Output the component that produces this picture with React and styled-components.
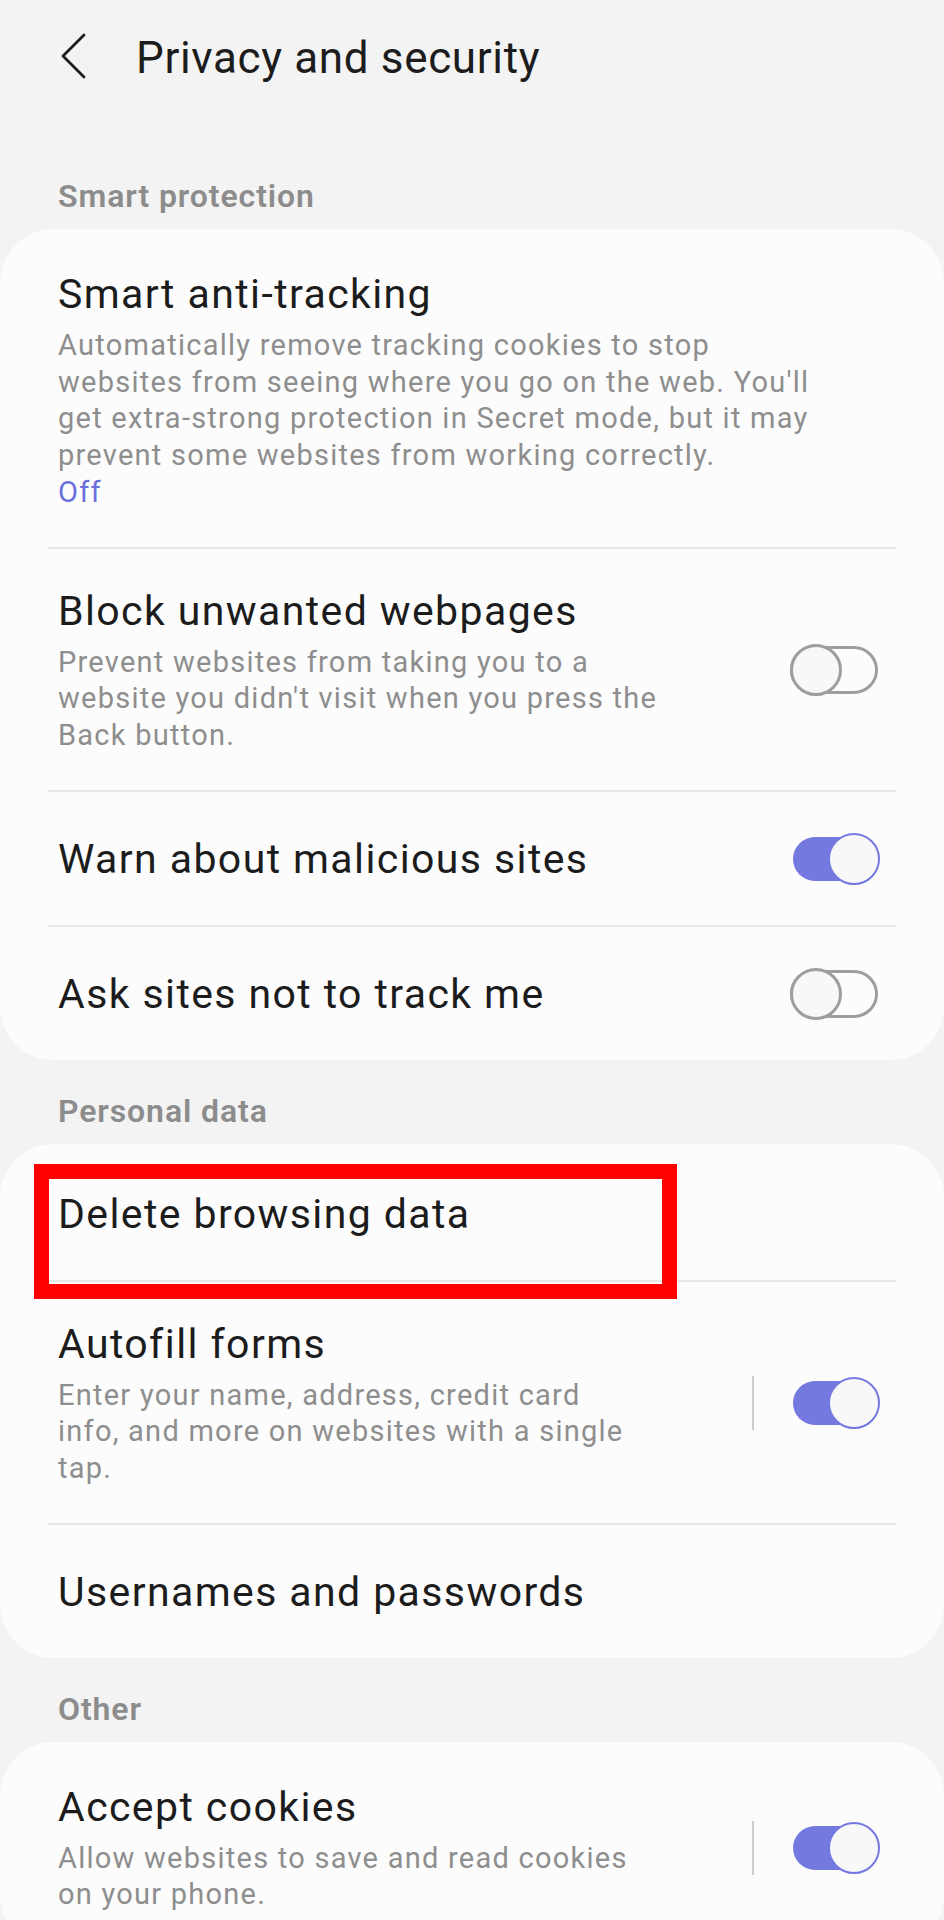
import styled, { createGlobalStyle } from "styled-components";

const GlobalStyle = createGlobalStyle`
  body {
    margin: 0;
    background: #f3f3f3;
    font-family: Roboto, "Liberation Sans", sans-serif;
    color: #1c1c1c;
  }
`;

const Page = styled.div`
  width: 944px;
  padding-bottom: 40px;
`;

const Header = styled.div`
  display: flex;
  align-items: flex-start;
  height: 145px;
  box-sizing: border-box;
  padding: 32px 0 0 61px;
`;

const BackIcon = styled.svg`
  width: 26px;
  height: 46px;
  margin-top: 1px;
  margin-right: 49px;
`;

const Title = styled.h1`
  margin: 0;
  font-size: 44px;
  line-height: 52px;
  font-weight: 400;
  letter-spacing: 0.65px;
  color: #1c1c1c;
`;

const SectionTitle = styled.div`
  padding: 32px 58px 14px;
  font-size: 32px;
  line-height: 38px;
  font-weight: 600;
  letter-spacing: 0.9px;
  color: #8c8c8c;
`;

const Card = styled.div`
  background: #fcfcfc;
  border-radius: 54px;
  padding: 3px 0 0;
`;

const Row = styled.div`
  position: relative;
  display: flex;
  align-items: center;
  min-height: 133px;
  box-sizing: border-box;
  padding: 38px 64px 36px 58px;
`;

const Texts = styled.div`
  flex: 1;
  min-width: 0;
`;

const Label = styled.div`
  font-size: 41px;
  line-height: 48px;
  letter-spacing: 1.4px;
  color: #1c1c1c;
`;

const Desc = styled.div`
  margin-top: 9px;
  font-size: 29px;
  line-height: 36.7px;
  letter-spacing: 1.25px;
  color: #8e8e8e;
`;

const Status = styled.div`
  font-size: 29px;
  line-height: 36.7px;
  letter-spacing: 1.25px;
  color: #6a6fdc;
`;

const Divider = styled.div`
  height: 2px;
  margin: 0 48px;
  background: #e6e6e6;
`;

const Separator = styled.div`
  width: 2px;
  height: 54px;
  background: #cdcdcd;
  margin-right: 36px;
`;

const Switch = styled.div`
  position: relative;
  flex: none;
  width: 90px;
  height: 54px;
`;

const Track = styled.div`
  position: absolute;
  box-sizing: border-box;
  left: ${(p) => (p.$on ? "3px" : "0")};
  right: ${(p) => (p.$on ? "6px" : "2px")};
  top: ${(p) => (p.$on ? "5px" : "3px")};
  bottom: ${(p) => (p.$on ? "5px" : "3px")};
  border-radius: 26px;
  background: ${(p) => (p.$on ? "#7479e0" : "transparent")};
  border: ${(p) => (p.$on ? "none" : "3px solid #9e9e9e")};
`;

const Thumb = styled.div`
  position: absolute;
  box-sizing: border-box;
  top: 1px;
  width: 52px;
  height: 52px;
  border-radius: 50%;
  background: #f8f8f8;
  left: ${(p) => (p.$on ? "auto" : "0")};
  right: ${(p) => (p.$on ? "0" : "auto")};
  border: ${(p) => (p.$on ? "2.5px solid #7479e0" : "3px solid #9e9e9e")};
`;

const Highlight = styled.div`
  position: absolute;
  left: 34px;
  top: 17px;
  width: 643px;
  height: 135px;
  box-sizing: border-box;
  border: 15px solid #ff0000;
  z-index: 2;
  pointer-events: none;
`;

const Toggle = ({ on }) => (
  <Switch>
    <Track $on={on} />
    <Thumb $on={on} />
  </Switch>
);

const lines = (arr) =>
  arr.map((l, i) => (
    <span key={i}>
      {l}
      {i < arr.length - 1 && <br />}
    </span>
  ));

const Setting = ({ label, desc, status, toggle, separator, highlight }) => (
  <Row>
    {highlight && <Highlight />}
    <Texts>
      <Label>{label}</Label>
      {desc && <Desc>{lines(desc)}</Desc>}
      {status && <Status>{status}</Status>}
    </Texts>
    {separator && <Separator />}
    {toggle !== undefined && <Toggle on={toggle} />}
  </Row>
);

const App = () => {
  return (
    <>
      <GlobalStyle />
      <Page>
        <Header>
          <BackIcon viewBox="0 0 26 46">
            <polyline
              points="23,2 2,23 23,44"
              fill="none"
              stroke="#1c1c1c"
              strokeWidth="2.8"
              strokeLinecap="round"
              strokeLinejoin="round"
            />
          </BackIcon>
          <Title>Privacy and security</Title>
        </Header>

        <SectionTitle>Smart protection</SectionTitle>
        <Card>
          <Setting
            label="Smart anti-tracking"
            desc={[
              "Automatically remove tracking cookies to stop",
              "websites from seeing where you go on the web. You'll",
              "get extra-strong protection in Secret mode, but it may",
              "prevent some websites from working correctly.",
            ]}
            status="Off"
          />
          <Divider />
          <Setting
            label="Block unwanted webpages"
            desc={[
              "Prevent websites from taking you to a",
              "website you didn't visit when you press the",
              "Back button.",
            ]}
            toggle={false}
          />
          <Divider />
          <Setting label="Warn about malicious sites" toggle={true} />
          <Divider />
          <Setting label="Ask sites not to track me" toggle={false} />
        </Card>

        <SectionTitle>Personal data</SectionTitle>
        <Card>
          <Setting label="Delete browsing data" highlight />
          <Divider />
          <Setting
            label="Autofill forms"
            desc={[
              "Enter your name, address, credit card",
              "info, and more on websites with a single",
              "tap.",
            ]}
            separator
            toggle={true}
          />
          <Divider />
          <Setting label="Usernames and passwords" />
        </Card>

        <SectionTitle>Other</SectionTitle>
        <Card>
          <Setting
            label="Accept cookies"
            desc={["Allow websites to save and read cookies", "on your phone."]}
            separator
            toggle={true}
          />
        </Card>
      </Page>
    </>
  );
};

export default App;
